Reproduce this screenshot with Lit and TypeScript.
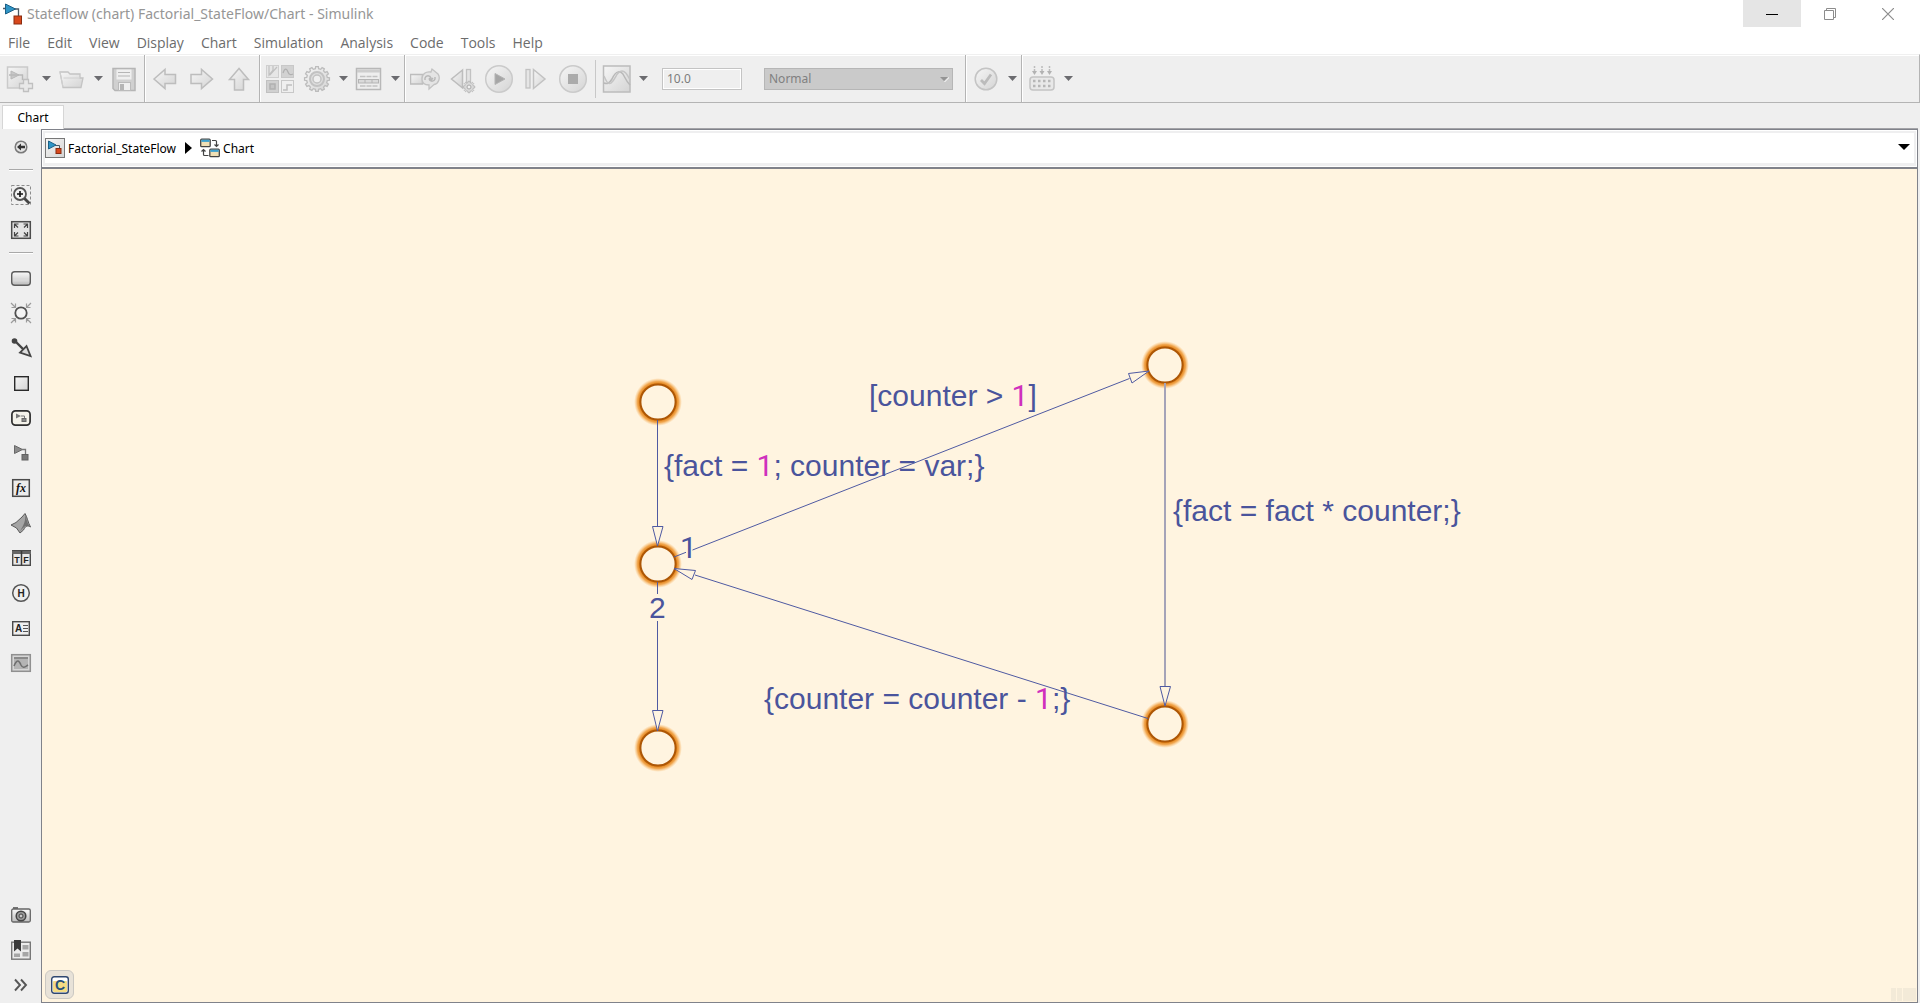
import { LitElement, html, svg, css, TemplateResult, SVGTemplateResult } from "lit";
import { customElement, state } from "lit/decorators.js";

type Glyph = SVGTemplateResult;

const MENUS = ["File", "Edit", "View", "Display", "Chart", "Simulation", "Analysis", "Code", "Tools", "Help"];

/** Cog outline with the given number of teeth. */
function cog(cx: number, cy: number, outer: number, inner: number, teeth: number): string {
  const points: string[] = [];
  const step = (Math.PI * 2) / teeth;
  for (let i = 0; i < teeth; i++) {
    const a = i * step - Math.PI / 2;
    for (const [offset, radius] of [[-0.3, inner], [-0.2, outer], [0.2, outer], [0.3, inner]]) {
      points.push(`${(cx + radius * Math.cos(a + offset * step)).toFixed(2)},${(cy + radius * Math.sin(a + offset * step)).toFixed(2)}`);
    }
  }
  return points.join(" ");
}

const fade = svg`<defs>
  <linearGradient id="g" x1="0" y1="0" x2="1" y2="1"><stop offset="0" stop-color="#f6f6f6"/><stop offset="1" stop-color="#d4d4d4"/></linearGradient>
  <linearGradient id="d" x1="0" y1="0" x2="0" y2="1"><stop offset="0" stop-color="#fafafa"/><stop offset="1" stop-color="#bdbdbd"/></linearGradient>
</defs>`;

const TOOL: Record<string, Glyph> = {
  new: svg`<rect x="2.500" y="3" width="20" height="21" fill="url(#g)" stroke="#cacaca" stroke-width="1.500"/>
    <path d="M6 7l8 4-8 4z" fill="#c8c8c8" stroke="#b8b8b8"/><path d="M4 11h10h3.500v5" fill="none" stroke="#b8b8b8" stroke-width="1.400"/>
    <path d="M18.500 15.500h5v4h4v5h-4v3h-5v-3h-4v-5h4z" fill="#e8e8e8" stroke="#c0c0c0" stroke-width="1.300"/>`,
  open: svg`<path d="M3 8h8l2 2h10v4h3l-2 9.500H6z" fill="url(#g)" stroke="#c4c4c4" stroke-width="1.300"/><path d="M6 23l-3-15M6.500 14H23" fill="none" stroke="#d0d0d0"/>`,
  save: svg`<path d="M4 4.500h22v22H6l-2-2z" fill="#d0d0d0" stroke="#b5b5b5" stroke-width="1.500"/><rect x="7.500" y="5.500" width="15" height="10" fill="#efefef"/>
    <path d="M9 8.500h12M9 12h12" stroke="#b5b5b5"/><rect x="9.500" y="18.500" width="12" height="8" fill="#efefef" stroke="#bbb"/><rect x="11" y="20" width="4" height="6" fill="#b5b5b5"/>`,
  back: svg`<path d="M4 15L15 5.500v5h10.500v9H15v5z" fill="url(#g)" stroke="#bdbdbd" stroke-width="1.500"/>`,
  forward: svg`<path d="M25.500 15L14.500 5.500v5H4v9h10.500v5z" fill="url(#g)" stroke="#bdbdbd" stroke-width="1.500"/>`,
  up: svg`<path d="M15 4.500L5.500 15.500h5V26h9V15.500h5z" fill="url(#g)" stroke="#bdbdbd" stroke-width="1.500"/>`,
  library: svg`<rect x="1.500" y="1.500" width="12" height="12" fill="#e6e6e6" stroke="#cfcfcf"/><rect x="16.500" y="1.500" width="12" height="12" fill="#d2d2d2" stroke="#c8c8c8"/>
    <rect x="1.500" y="16.500" width="12" height="12" fill="#d0d0d0" stroke="#c0c0c0"/><rect x="16.500" y="16.500" width="12" height="12" fill="#efefef" stroke="#c8c8c8"/>
    <path d="M4 2v9l4-5V2M4 11h1l7-8" fill="none" stroke="#c0c0c0" stroke-width="1.200"/><path d="M18 9c2-6 4-4 5-1s3 3 5 2" fill="none" stroke="#b0b0b0" stroke-width="1.300"/>
    <rect x="5" y="20" width="5" height="5" fill="#c4c4c4" stroke="#b0b0b0" stroke-width="1.500"/><path d="M18 26h4v-5h5" fill="none" stroke="#c0c0c0" stroke-width="1.500"/>`,
  gear: svg`<polygon points=${cog(15, 15, 12.5, 10.4, 12)} fill="url(#g)" stroke="#bcbcbc" stroke-width="1.300"/><circle cx="15" cy="15" r="7" fill="#dedede" stroke="#c2c2c2" stroke-width="2"/><circle cx="15" cy="15" r="4" fill="#efefef" stroke="#c2c2c2" stroke-width="1.500"/>`,
  table: svg`<rect x="2.500" y="4.500" width="24" height="21" fill="#eee" stroke="#b8b8b8" stroke-width="1.500"/><path d="M3 7h23" stroke="#cdcdcd" stroke-width="3"/>
    <path d="M6 12.500h5.500M12.500 12.500h5M18.500 12.500h5M6 22h5.500M12.500 22h5M18.500 22h5" stroke="#c2c2c2" stroke-width="1.500"/><rect x="4.500" y="15.500" width="20" height="3.500" fill="#dadada" stroke="#b4b4b4"/><path d="M11 15v4M18 15v4" stroke="#b4b4b4"/>`,
  update: svg`<rect x="0.500" y="10.500" width="12" height="9.500" fill="url(#g)" stroke="#bdbdbd" stroke-width="1.500"/>
    <path d="M21 8c-5-1-9 2-9 7 0 4 3 6 7 6v4l5-4.500c5-1 6.500-7 4-10.500L22 5z" fill="#e4e4e4" stroke="#c2c2c2" stroke-width="1.300"/>
    <path d="M15 16v-2c1-3 5-3 6 0v2M25 13v2c-1 3-5 3-6 0M19 14l2 2.500 2-2.500" fill="none" stroke="#b8b8b8" stroke-width="1.400"/>`,
  stepback: svg`<path d="M15.500 6v18L4.500 15z" fill="url(#g)" stroke="#bdbdbd" stroke-width="1.500"/><rect x="19.500" y="5.500" width="4" height="14" fill="#e4e4e4" stroke="#c2c2c2" stroke-width="1.300"/>
    <polygon points=${cog(22, 23, 5.8, 4.5, 8)} fill="#d9d9d9" stroke="#b8b8b8"/><circle cx="22" cy="23" r="2" fill="#efefef" stroke="#aaa"/>`,
  play: svg`<circle cx="15" cy="15" r="13.300" fill="url(#g)" stroke="#cacaca" stroke-width="1.500"/><path d="M11 9.500v11l10-5.500z" fill="#a6a6a6" stroke="#b4b4b4"/>`,
  stepforward: svg`<rect x="5" y="5.500" width="4" height="18.500" fill="#e6e6e6" stroke="#c2c2c2" stroke-width="1.300"/><path d="M12.500 5.500v19l11.500-9.500z" fill="url(#g)" stroke="#c2c2c2" stroke-width="1.500"/>`,
  stop: svg`<circle cx="15" cy="15" r="13.300" fill="url(#g)" stroke="#cacaca" stroke-width="1.500"/><rect x="10" y="10" width="10" height="10" fill="#ababab"/>`,
  scope: svg`<rect x="1.500" y="2" width="26.500" height="26" fill="url(#g)" stroke="#bcbcbc" stroke-width="1.500"/>
    <path d="M2 19c3 1 5 1 8-4 4-9 9-9 12-3 2 4 3 6 6 9" fill="none" stroke="#b8b8b8" stroke-width="1.500"/><path d="M2 12c2 5 4 9 7 7 5-3 5-12 11-12 4 0 6 5 8 9" fill="none" stroke="#c4c4c4" stroke-width="1.500"/>`,
  check: svg`<circle cx="15" cy="15" r="10.800" fill="url(#g)" stroke="#c4c4c4" stroke-width="1.500"/><path d="M10 16l3.500 3.500 6.500-9" fill="none" stroke="#bbb" stroke-width="2.800"/>`,
  build: svg`<rect x="3" y="13" width="24" height="13" rx="3" fill="#e8e8e8" stroke="#c4c4c4" stroke-width="1.500"/>
    <path d="M6 17h2.500M11 17h2.500M16 17h2.500M21 17h2.500M6 22h2.500M11 22h2.500M16 22h2.500M21 22h2.500" stroke="#b6b6b6" stroke-width="2.500"/>
    <path d="M7.500 2v6M15 2v6M22.500 2v6" stroke="#bcbcbc" stroke-width="1.500" stroke-dasharray="2 1"/><path d="M5 7h5l-2.500 4zM12.500 7h5L15 11zM20 7h5l-2.500 4z" fill="#b2b2b2"/>`,
};

const SIDE: Record<string, Glyph> = {
  hide: svg`<circle cx="11" cy="11" r="5.800" fill="#e4e4e4" stroke="#7a7a7a" stroke-width="1.500"/><path d="M7 11l4-3.500v2.200h4v2.600h-4v2.200z" fill="#333"/>`,
  zoom: svg`<rect x="1.500" y="1.500" width="19" height="19" fill="none" stroke="#8c8c8c" stroke-dasharray="3 2"/><circle cx="10" cy="10" r="6" fill="#f2f2f2" stroke="#555" stroke-width="1.800"/><path d="M7 10h6M10 7v6" stroke="#111" stroke-width="1.600"/><path d="M14.500 14.500l5 5" stroke="#444" stroke-width="2.800"/>`,
  fit: svg`<rect x="1.700" y="2.700" width="18.600" height="16.600" fill="#e4e4e4" stroke="#4c4c4c" stroke-width="1.500"/><path d="M4.500 9V5h4M13.500 5h4v4M4.500 13v4h4M17.500 13v4h-4M5 5.500l3 3M17 5.500l-3 3M5 16.500l3-3M17 16.500l-3-3" fill="none" stroke="#444" stroke-width="1.200"/>`,
  state: svg`<rect x="1.700" y="4.700" width="18.600" height="13.600" rx="3" fill="url(#d)" stroke="#5c5c5c" stroke-width="1.400"/><path d="M3 11.500h16v3H3z" fill="#d9d9d9"/>`,
  junction: svg`<circle cx="11" cy="11" r="5.700" fill="#f4f4f4" stroke="#505050" stroke-width="1.800"/><path d="M1 1l4 4M21 1l-4 4M1 21l4-4M21 21l-4-4M1.500 5.500h4v-4M16.500 1.500v4h4M1.500 16.500h4v4M20.500 16.500h-4v4" fill="none" stroke="#9c9c9c" stroke-width="1.200"/>`,
  transition: svg`<circle cx="4.500" cy="4" r="2.800" fill="#444"/><path d="M5 4l8 8" stroke="#444" stroke-width="2.400"/><path d="M16.500 9l4 10-10.500-3.500z" fill="#ddd" stroke="#444" stroke-width="1.800"/>`,
  box: svg`<rect x="4.700" y="4.700" width="13.600" height="13.600" fill="url(#g)" stroke="#2a2a2a" stroke-width="1.400"/>`,
  simstate: svg`<rect x="1.900" y="3.900" width="18.200" height="14.200" rx="3.500" fill="#f4f2ea" stroke="#2e2e2e" stroke-width="1.700"/><path d="M6 6.500l5 2.500-5 2.500z" fill="#777"/><path d="M11 9h3.500v3" fill="none" stroke="#777"/><rect x="12" y="11.500" width="4" height="3" fill="#888" stroke="#666"/>`,
  simfunc: svg`<path d="M4.500 3.500l8 4-8 4z" fill="#8c8c8c" stroke="#686868"/><path d="M12 7.500h3.500v5" fill="none" stroke="#777" stroke-width="1.300"/><rect x="12" y="12.500" width="6" height="5.500" fill="#777" stroke="#606060"/>`,
  fx: svg`<rect x="2.700" y="2.700" width="16.600" height="16.600" fill="#ececec" stroke="#4a4a4a" stroke-width="1.500"/><text x="11" y="15" text-anchor="middle" font-family="Liberation Serif, serif" font-style="italic" font-weight="bold" font-size="12" fill="#111">fx</text>`,
  matlab: svg`<path d="M1 13l5-2.500 6-5.500 3-3.500c2 3 3 9 5.500 13.500-3-2-5-1-7 3l-3.500 3-3.500-5z" fill="#a4a4a4" stroke="#5a5a5a"/><path d="M15 2c1 6-1 11-5 17 3-2 4-6 9-5-2-4-3-9-4-12z" fill="#505050" opacity="0.600"/>`,
  truth: svg`<rect x="2.700" y="3.700" width="17.600" height="14.600" fill="#e9e9e9" stroke="#4a4a4a" stroke-width="1.400"/><path d="M2 5.500h19" stroke="#666" stroke-width="3"/><path d="M11.500 4v14.500" stroke="#3a3a3a" stroke-width="1.500"/><text x="7" y="16" text-anchor="middle" class="tiny" font-size="9">T</text><text x="16" y="16" text-anchor="middle" class="tiny" font-size="9">F</text>`,
  history: svg`<circle cx="11" cy="11" r="8.300" fill="#f0f0f0" stroke="#555" stroke-width="1.500"/><text x="11" y="15" text-anchor="middle" class="tiny" font-size="10">H</text>`,
  note: svg`<rect x="2.700" y="4.700" width="16.600" height="13.600" fill="#efefef" stroke="#4a4a4a" stroke-width="1.400"/><text x="8.500" y="15" text-anchor="middle" class="tiny" font-size="10">A</text><path d="M13 8.500h5M13 11.500h5M13 14.500h5" stroke="#555"/>`,
  image: svg`<rect x="1.700" y="2.700" width="18.600" height="16.600" fill="#d6d6d6" stroke="#909090" stroke-width="1.500"/><rect x="4" y="5" width="14" height="12" fill="#b4b4b4"/><path d="M4 6h14" stroke="#8a8a8a" stroke-width="2"/><path d="M4 14c3-7 5-6 7-1 2 4 4 2 7 0" fill="none" stroke="#6f6f6f" stroke-width="1.600"/>`,
  camera: svg`<rect x="1.700" y="5" width="18.600" height="13" rx="1.500" fill="url(#d)" stroke="#666" stroke-width="1.300"/><path d="M3 4h5" stroke="#666" stroke-width="1.800"/><circle cx="11" cy="12" r="4.800" fill="#999" stroke="#444" stroke-width="1.500"/><circle cx="11" cy="12" r="2" fill="#ccc" stroke="#444"/><path d="M16 7.500h3" stroke="#f2f2f2" stroke-width="1.500"/>`,
  bookmark: svg`<rect x="1.700" y="3.200" width="18.600" height="17" fill="#ececec" stroke="#777" stroke-width="1.400"/><path d="M12.500 6h6v4.500h-6zM12.500 13h6v4.500h-6zM4 14.500h6v3.500H4z" fill="#a6a6a6"/><path d="M4 1h7v11.500l-3.500-3-3.500 3z" fill="#3a3a3a"/>`,
  more: svg`<path d="M5 5.500l5 5.500-5 5.500M11 5.500l5 5.500-5 5.500" fill="none" stroke="#565656" stroke-width="1.900"/>`,
};

const modelLogo = svg`<path d="M1 5.500h3M13 6h3.500v8" fill="none" stroke="#4c5a66" stroke-width="1.300"/><path d="M3.500 1l10 5-10 5z" fill="#2f95c6" stroke="#1c5f86"/><rect x="12" y="13" width="7.500" height="8" fill="#d8481c" stroke="#8a2c10"/>`;

@customElement("app-root")
export class AppRoot extends LitElement {
  @state() private stopTime = "10.0";

  static styles = css`
    :host {
      display: flex;
      flex-direction: column;
      min-height: 100vh;
      background: #efefef;
      color: #000;
      font-family: "Noto Sans", "Open Sans", sans-serif;
      font-size: 12px;
    }
    * { box-sizing: border-box; }
    button, input, select { font: inherit; color: inherit; margin: 0; padding: 0; border: 0; background: none; }
    svg { display: block; flex: none; }
    .titlebar { display: flex; align-items: center; height: 27px; background: #fff; padding: 0 3px 0 2px; }
    .title { flex: 1; margin: 0 0 0 4px; font-size: 14px; font-weight: 400; line-height: 29px; color: #969696; }
    .win { width: 58px; height: 27px; display: flex; align-items: center; justify-content: center; }
    .win.active { background: #e5e5e5; }
    .menubar { display: flex; gap: 17px; height: 27px; padding: 0 8px; background: #fff; }
    .menu { font-family: "Open Sans", "Noto Sans", sans-serif; font-size: 14px; line-height: 32px; height: 27px; display: flex; color: #6c6c6c; }
    .toolbar { display: flex; height: 49px; padding-left: 1px; border-top: 1px solid #f0f0f0; border-bottom: 1px solid #b4b4b4; border-right: 1px solid #b4b4b4; box-shadow: inset 0 1px #fff; }
    .group { display: flex; align-items: center; padding: 0 1px 0 2px; border-right: 1px solid #b4b4b4; box-shadow: 1px 0 #fff; }
    .group:first-child { padding-left: 1px; }
    .group:last-child { border-right: 0; box-shadow: none; }
    .tool { width: 37px; height: 44px; padding-right: 1px; display: flex; align-items: center; justify-content: center; }
    .drop { width: 15px; height: 44px; display: flex; align-items: center; justify-content: center; }
    .rule { width: 1px; height: 38px; margin: 0 3px; background: #c8c8c8; }
    .stoptime { width: 80px; height: 22px; margin: 0 22px 0 11px; padding: 0 4px; border: 1px solid #c4c4c4; box-shadow: inset 0 0 0 1px #fff; color: #7c7c7c; }
    .mode { position: relative; display: flex; width: 189px; height: 22px; margin-right: 11px; }
    .mode select { appearance: none; width: 100%; padding: 0 4px; border: 1px solid #b6b6b6; border-radius: 0; background: #cacaca; color: #808080; opacity: 1; }
    .mode svg { position: absolute; right: 4px; top: 8px; pointer-events: none; }
    .tabs { display: flex; height: 26px; padding: 2px 2px 0; }
    .tab { width: 62px; padding: 0; border: 1px solid #d6d6d6; border-bottom: 0; background: #fff; line-height: 22px; }
    .filler { flex: 1; border-bottom: 1px solid #a4a4a8; }
    .body { flex: 1; display: flex; padding-right: 2px; }
    .palette { display: flex; flex-direction: column; align-items: center; width: 41px; padding-bottom: 1px; }
    .pick { width: 41px; height: 35px; display: flex; align-items: center; justify-content: center; }
    .divider { width: 24px; height: 2px; margin: 5px 0 6px; border: 0; background: #a9a9a9; border-bottom: 1px solid #fff; }
    .spring { flex: 1; }
    .main { flex: 1; display: flex; flex-direction: column; border: 1px solid #80828a; }
    .crumbs { display: flex; align-items: center; height: 37px; background: #fff; border: 1px solid #fff; }
    .trail { flex: 1; display: flex; align-items: center; height: 35px; padding: 0 4px 0 0; border: 2px solid #efeff0; border-bottom-width: 3px; }
    .crumb { display: flex; align-items: center; gap: 3px; color: #000; text-decoration: none; }
    .next { margin: 0 8px 0 9px; }
    .end { margin: 0 0 3px auto; display: flex; }
    .chart { position: relative; flex: 1; display: flex; overflow: hidden; border-top: 2px solid #80828a; background: #fff4e0; }
    .diagram { flex: 1; width: 100%; height: auto; font-family: "Liberation Sans", Arial, sans-serif; font-size: 30px; }
    .label { fill: #4a549c; }
    .num { fill: #cf30bd; }
    .digit { font-family: Roboto, "Liberation Sans", sans-serif; }
    .wire { fill: none; stroke: #4f5aa2; stroke-width: 1; }
    .head { fill: #fff4e0; stroke: #4f5aa2; stroke-width: 1; }
    .node { fill: #fff4e0; stroke: #ad5706; stroke-width: 2; }
    .badge { position: absolute; left: 3px; bottom: 3px; width: 29px; height: 29px; display: flex; align-items: center; justify-content: center; border: 1px solid #cbc8c2; border-radius: 6px; background: #e8e2d8; }
    .grip { position: absolute; right: 1px; bottom: 1px; }
    .tiny { font-family: "Liberation Sans", sans-serif; font-weight: bold; fill: #222; }
  `;

  private tool(name: string, label: string): TemplateResult {
    return html`<button class="tool" aria-label=${label}><svg width="30" height="30" viewBox="0 0 30 30">${fade}${TOOL[name]}</svg></button>`;
  }

  private drop(label: string): TemplateResult {
    return html`<button class="drop" aria-label=${label}><svg width="9" height="5" viewBox="0 0 9 5"><path d="M0 0h9L4.500 5z" fill="#6b6b6f"/></svg></button>`;
  }

  private pick(name: string, label: string): TemplateResult {
    return html`<button class="pick" aria-label=${label}><svg width="22" height="22" viewBox="0 0 22 22">${fade}${SIDE[name]}</svg></button>`;
  }

  private node(x: number, y: number): SVGTemplateResult {
    return svg`<circle cx=${x} cy=${y} r="24" fill="url(#glow)"/><circle class="node" cx=${x} cy=${y} r="17.600"/>`;
  }

  private diagram(): TemplateResult {
    return html`<svg class="diagram" role="img" aria-label="Factorial flow chart">
      <defs><radialGradient id="glow">
        <stop offset="0.74" stop-color="#dc7404"/><stop offset="0.86" stop-color="#ee9630" stop-opacity="0.8"/><stop offset="0.94" stop-color="#f6b464" stop-opacity="0.4"/><stop offset="1" stop-color="#fbc880" stop-opacity="0"/>
      </radialGradient></defs>
      <g transform="translate(-42 -169)">
        ${[[658, 402], [658, 564], [658, 748], [1165, 365], [1165, 724]].map(([x, y]) => this.node(x, y))}
        <path class="wire" d="M657.500 420v106M657.500 582v12M657.500 621v90M674 557l12-4.700M692.500 550L1129.500 378.500M1148 718.500L695 575"/>
        <path d="M1165 383v303" stroke="#a5a3b8" stroke-width="2"/>
        <path class="head" d="M652.500 526.500h10.500L657.500 546zM652.500 710.500h10.500L657.500 731zM1160 686.500h10.500L1165 706zM1128.500 373.500l3.500 9.500L1149 371zM695.500 570.500l-3.500 9L674 568.500z"/>
        <text class="label" x="869" y="406">[counter &gt; <tspan class="num digit">1</tspan>]</text>
        <text class="label" x="664" y="476">{fact = <tspan class="num digit">1</tspan>; counter = var;}</text>
        <text class="label" x="1173" y="521">{fact = fact * counter;}</text>
        <text class="label" x="764" y="709">{counter = counter - <tspan class="num digit">1</tspan>;}</text>
        <text class="label digit" x="680" y="558">1</text>
        <text class="label" x="649" y="618">2</text>
      </g>
    </svg>`;
  }

  render(): TemplateResult {
    return html`
      <header class="titlebar">
        <svg width="21" height="22" viewBox="0 0 21 22">${modelLogo}</svg>
        <h1 class="title">Stateflow (chart) Factorial_StateFlow/Chart - Simulink</h1>
        <button class="win active" aria-label="Minimize"><svg width="12" height="12"><path d="M0 6.500h12" stroke="#000"/></svg></button>
        <button class="win" aria-label="Restore"><svg width="12" height="12" viewBox="0 0 12 12"><path d="M0.500 2.500h9v9h-9zM2.500 2.500v-2h9v9h-2" fill="none" stroke="#8c8c8c"/></svg></button>
        <button class="win" aria-label="Close"><svg width="12" height="12" viewBox="0 0 12 12"><path d="M0 0l12 12M12 0L0 12" stroke="#8c8c8c" stroke-width="1.200"/></svg></button>
      </header>
      <nav class="menubar" aria-label="Menu">${MENUS.map((m) => html`<button class="menu">${m}</button>`)}</nav>
      <div class="toolbar" role="toolbar" aria-label="Model tools">
        <div class="group">${this.tool("new", "New")}${this.drop("New options")}${this.tool("open", "Open")}${this.drop("Open options")}${this.tool("save", "Save")}</div>
        <div class="group">${this.tool("back", "Back")}${this.tool("forward", "Forward")}${this.tool("up", "Up to parent")}</div>
        <div class="group">${this.tool("library", "Library browser")}${this.tool("gear", "Configuration")}${this.drop("Configuration options")}${this.tool("table", "Model explorer")}${this.drop("Explorer options")}</div>
        <div class="group">
          ${this.tool("update", "Fast restart")}${this.tool("stepback", "Step back")}${this.tool("play", "Run")}${this.tool("stepforward", "Step forward")}${this.tool("stop", "Stop")}
          <span class="rule"></span>
          ${this.tool("scope", "Data inspector")}${this.drop("Inspector options")}
          <input class="stoptime" aria-label="Stop time" .value=${this.stopTime} @input=${(e: Event) => (this.stopTime = (e.target as HTMLInputElement).value)} />
          <div class="mode">
            <select aria-label="Simulation mode" disabled><option>Normal</option></select>
            <svg width="9" height="6" viewBox="0 0 9 6"><path d="M4 6l5-5v1L5 6z" fill="#fff"/><path d="M0 1h8L4 5z" fill="#949494"/></svg>
          </div>
        </div>
        <div class="group">${this.tool("check", "Model advisor")}${this.drop("Advisor options")}</div>
        <div class="group">${this.tool("build", "Build")}${this.drop("Build options")}</div>
      </div>
      <div class="tabs" role="tablist"><button class="tab" role="tab" aria-selected="true">Chart</button><span class="filler"></span></div>
      <div class="body">
        <aside class="palette" aria-label="Palette">
          ${this.pick("hide", "Hide explorer bar")}
          <hr class="divider" />
          ${this.pick("zoom", "Zoom")}${this.pick("fit", "Fit to view")}
          <hr class="divider" />
          ${this.pick("state", "State")}${this.pick("junction", "Junction")}${this.pick("transition", "Default transition")}${this.pick("box", "Box")}
          ${this.pick("simstate", "Simulink state")}${this.pick("simfunc", "Simulink function")}${this.pick("fx", "Graphical function")}${this.pick("matlab", "MATLAB function")}
          ${this.pick("truth", "Truth table")}${this.pick("history", "History junction")}${this.pick("note", "Annotation")}${this.pick("image", "Image")}
          <span class="spring"></span>
          ${this.pick("camera", "Screenshot")}${this.pick("bookmark", "Viewmarks")}${this.pick("more", "More")}
        </aside>
        <main class="main">
          <nav class="crumbs" aria-label="Breadcrumb"><div class="trail">
            <a class="crumb" href="#model"><svg width="20" height="20" viewBox="0 0 20 20">${fade}<rect x="0.500" y="0.500" width="19" height="19" fill="url(#g)" stroke="#777"/><path d="M10 7.500h4.500V11" fill="none" stroke="#4c5a66"/><path d="M3.500 3l7.500 4-7.500 4z" fill="#2f95c6" stroke="#1c5f86"/><rect x="11" y="10.500" width="5" height="5" fill="#d8481c" stroke="#8a2c10"/></svg><span>Factorial_StateFlow</span></a>
            <svg class="next" width="7" height="12" viewBox="0 0 7 12"><path d="M0 0l7 6-7 6z" fill="#000"/></svg>
            <a class="crumb" href="#chart"><svg width="20" height="20" viewBox="0 0 20 20"><rect x="0.700" y="1.200" width="9.500" height="7.500" rx="1" fill="#f0dfb4" stroke="#444" stroke-width="1.300"/><path d="M1.300 2.800h8.300" stroke="#3ba0d0" stroke-width="2.200"/><rect x="9.800" y="11.200" width="9.500" height="7.500" rx="1" fill="#f0dfb4" stroke="#444" stroke-width="1.300"/><path d="M10.400 12.800h8.300" stroke="#3ba0d0" stroke-width="2.200"/><path d="M12 2.500h3.500q1 0 1 1v4M14.500 6.500l2 2 2-2M8.500 17.500H4.500q-1 0-1-1v-4M1.500 13.500l2-2 2 2" fill="none" stroke="#444" stroke-width="1.200"/></svg><span>Chart</span></a>
            <button class="end" aria-label="Show path list"><svg width="12" height="6" viewBox="0 0 12 6"><path d="M0 0h12L6 6z" fill="#000"/></svg></button>
          </div></nav>
          <section class="chart" aria-label="Chart canvas">
            ${this.diagram()}
            <button class="badge" aria-label="C action language"><svg width="18" height="18" viewBox="0 0 18 18"><rect x="0.700" y="0.700" width="16.600" height="16.600" rx="2.500" fill="#fff" stroke="#2f4770" stroke-width="1.400"/><rect x="2" y="5" width="14" height="11" rx="1" fill="#f4dc84"/><text x="9" y="14" text-anchor="middle" font-family="Liberation Sans, sans-serif" font-weight="bold" font-size="14" fill="#28507c">C</text></svg></button>
            <svg class="grip" width="26" height="13" viewBox="0 0 26 13"><path d="M1 0h5v13H1zM7 0h5v13H7zM13 0h13v13H13z" fill="#f3ead8"/></svg>
          </section>
        </main>
      </div>
    `;
  }
}
